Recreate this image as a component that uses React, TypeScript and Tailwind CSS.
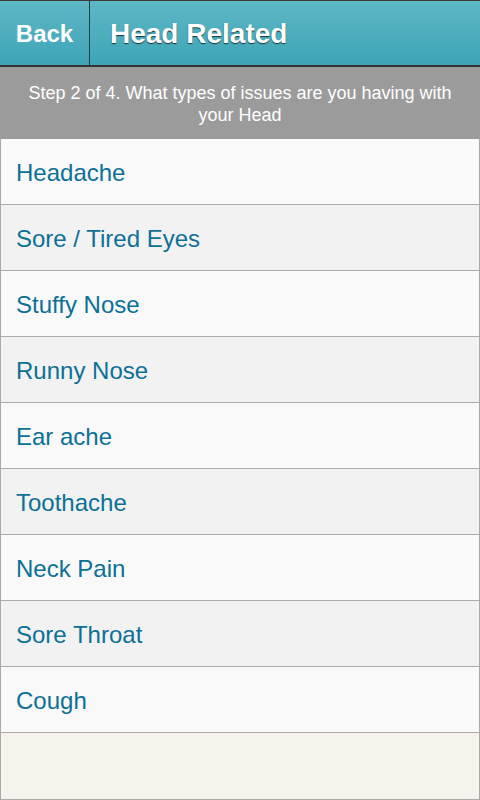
import React from 'react'

const items = [
  'Headache',
  'Sore / Tired Eyes',
  'Stuffy Nose',
  'Runny Nose',
  'Ear ache',
  'Toothache',
  'Neck Pain',
  'Sore Throat',
  'Cough',
]

export default function App() {
  return (
    <div className="flex h-[800px] w-[480px] flex-col bg-[#f6f3ed] font-['Liberation_Sans',Arial,sans-serif]">
      {/* header */}
      <div className="flex h-[67px] shrink-0 border-y border-t-[#3a3a3a] border-b-[#333] border-b-2 bg-gradient-to-b from-[#5db7c5] to-[#3da5b7] text-white [text-shadow:0_1px_1px_rgba(0,0,0,0.7)]">
        <button
          type="button"
          className="flex w-[90px] items-center justify-center border-r border-[#1f3a40] pt-0.5 text-[24px] font-bold"
        >
          Back
        </button>
        <h1 className="flex items-center pl-5 pt-0.5 text-[28px] font-bold">Head Related</h1>
      </div>

      {/* step */}
      <div className="flex h-[72px] shrink-0 items-center justify-center bg-[#9b9b9b] px-6 pt-0.5 text-center text-[18px] leading-[22px] text-white">
        Step 2 of 4. What types of issues are you having with your Head
      </div>

      {/* list */}
      <ul className="flex-1 border-x border-b border-[#aaa]">
        {items.map((item, i) => (
          <li
            key={item}
            className={`flex h-[66px] items-center border-b border-[#aaa] pl-[15px] pt-0.5 text-[24px] text-[#0d7096] ${
              i % 2 === 0 ? 'bg-[#f9f9f9]' : 'bg-[#f2f2f2]'
            }`}
          >
            {item}
          </li>
        ))}
      </ul>
    </div>
  )
}
